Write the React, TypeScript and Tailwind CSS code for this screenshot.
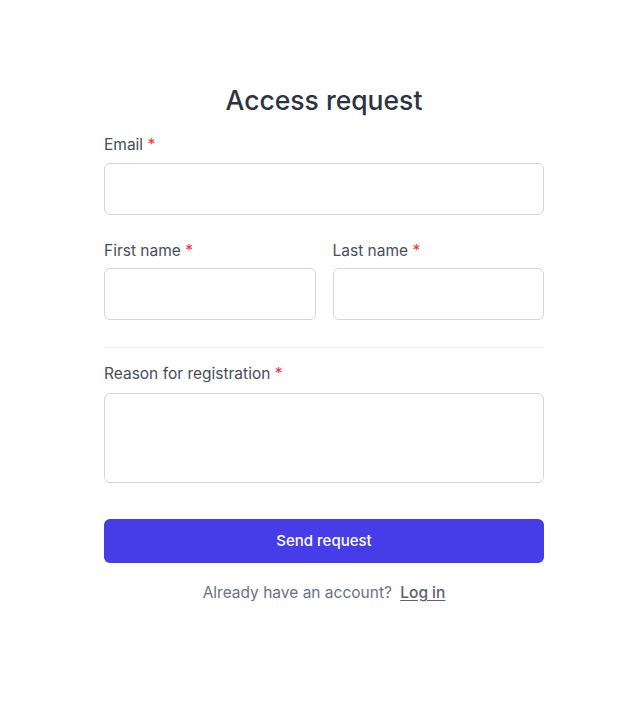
export default function App() {
    return (
        <div className="min-h-[702px] bg-white pl-2" style={{ fontFamily: 'Inter, "Noto Sans", sans-serif' }}>
            <div className="mx-auto w-[440px] pt-[84px]">
                {/* Title */}
                <h1 className="text-center text-[26.5px] leading-8 font-medium text-[#2d3342]">Access request</h1>

                <form className="mt-[18px]">
                    {/* Email */}
                    <label className="block pt-px text-[15.5px] leading-5 text-[#474d5c]">
                        Email <span className="text-red-500">*</span>
                    </label>
                    <input
                        type="email"
                        className="mt-[8px] block h-[52px] w-full rounded-md border border-[#d2d6e0] px-3 outline-none"
                    />

                    {/* Names */}
                    <div className="mt-[25px] grid grid-cols-2 gap-[17px]">
                        <div>
                            <label className="block pt-px text-[15.5px] leading-5 text-[#474d5c]">
                                First name <span className="text-red-500">*</span>
                            </label>
                            <input
                                type="text"
                                className="mt-[7px] block h-[52px] w-full rounded-md border border-[#d2d6e0] px-3 outline-none"
                            />
                        </div>
                        <div>
                            <label className="block pt-px text-[15.5px] leading-5 text-[#474d5c]">
                                Last name <span className="text-red-500">*</span>
                            </label>
                            <input
                                type="text"
                                className="mt-[7px] block h-[52px] w-full rounded-md border border-[#d2d6e0] px-3 outline-none"
                            />
                        </div>
                    </div>

                    <div className="mt-[27px] h-px bg-[#eef0f4]" />

                    {/* Reason */}
                    <label className="mt-[15px] block pt-px text-[15.5px] leading-5 text-[#474d5c]">
                        Reason for registration <span className="text-red-500">*</span>
                    </label>
                    <textarea className="mt-[9px] block h-[90px] w-full resize-none rounded-md border border-[#d2d6e0] px-3 py-2 outline-none" />

                    <button
                        type="button"
                        className="mt-[36px] flex h-[44px] w-full items-center justify-center rounded-md bg-[#473de8] text-[15px] font-medium text-white"
                    >
                        Send request
                    </button>
                </form>

                <p className="mt-[20px] text-center text-[15.5px] leading-5 text-[#6b7184]">
                    Already have an account?{' '}
                    <a href="#" className="ml-1 font-medium text-[#5b6072] underline underline-offset-2">
                        Log in
                    </a>
                </p>
            </div>
        </div>
    );
}
